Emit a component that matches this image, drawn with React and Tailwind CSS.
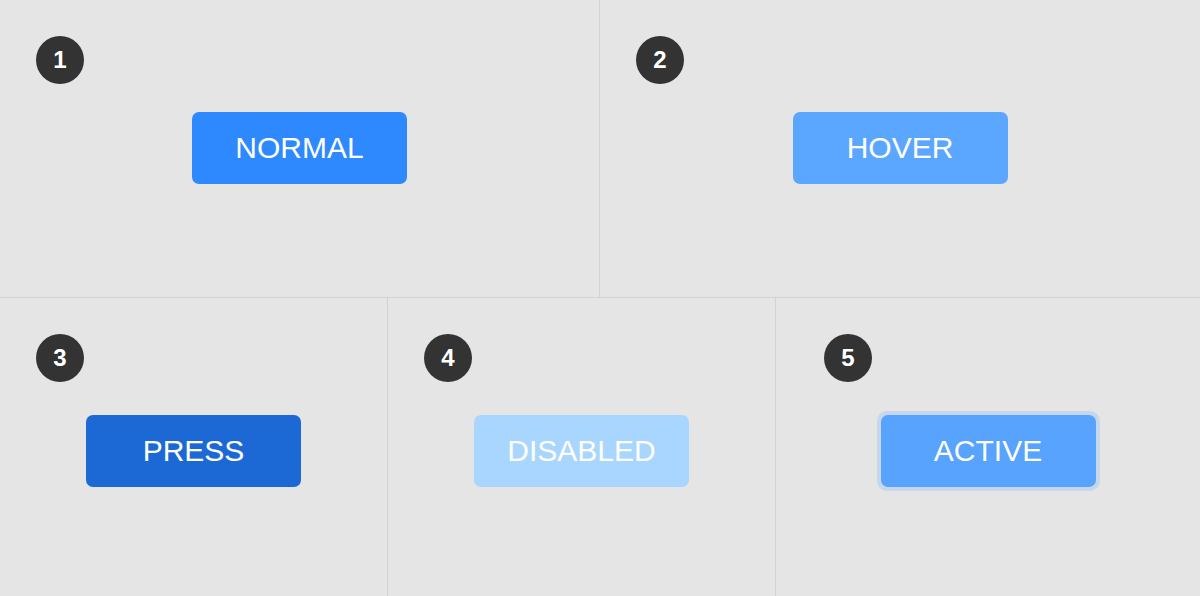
const Badge = ({ n }) => (
  <div className="w-12 h-12 rounded-full bg-[#333333] flex items-center justify-center text-white text-[24px] font-bold leading-none">
    {n}
  </div>
)

const Btn = ({ label, className }) => (
  <div
    className={
      "w-[215px] h-[72px] rounded-[7px] flex items-center justify-center text-white text-[30px] leading-none " +
      className
    }
  >
    {label}
  </div>
)

export default function App() {
  return (
    <div
      className="w-[1200px] h-[596px] bg-[#e5e5e5] flex flex-col overflow-hidden"
      style={{ fontFamily: '"Liberation Sans", Arial, sans-serif' }}
    >
      {/* top row */}
      <div className="h-[298px] grid grid-cols-[600px_1fr] border-b border-[#d3d3d3]">
        <div className="border-r border-[#d3d3d3] pt-9 pl-9 flex flex-col">
          <Badge n="1" />
          <div className="mt-7 flex justify-center pr-9">
            <Btn label="NORMAL" className="bg-[#2e89ff]" />
          </div>
        </div>
        <div className="pt-9 pl-9 flex flex-col">
          <Badge n="2" />
          <div className="mt-7 flex justify-center pr-9">
            <Btn label="HOVER" className="bg-[#5ba6ff]" />
          </div>
        </div>
      </div>

      {/* bottom row */}
      <div className="flex-1 grid grid-cols-[388px_388px_1fr]">
        <div className="border-r border-[#d3d3d3] pt-9 pl-9 flex flex-col">
          <Badge n="3" />
          <div className="mt-[33px] flex justify-center pr-9">
            <Btn label="PRESS" className="bg-[#1c69d6]" />
          </div>
        </div>
        <div className="border-r border-[#d3d3d3] pt-9 pl-9 flex flex-col">
          <Badge n="4" />
          <div className="mt-[33px] flex justify-center pr-9">
            <Btn label="DISABLED" className="bg-[#a9d6ff]" />
          </div>
        </div>
        <div className="pt-9 pl-12 flex flex-col">
          <Badge n="5" />
          <div className="mt-[29px] flex justify-center pr-12">
            <div className="p-1 rounded-[10px] bg-[#c6d7ec]">
              <Btn label="ACTIVE" className="bg-[#57a3fd]" />
            </div>
          </div>
        </div>
      </div>
    </div>
  )
}
